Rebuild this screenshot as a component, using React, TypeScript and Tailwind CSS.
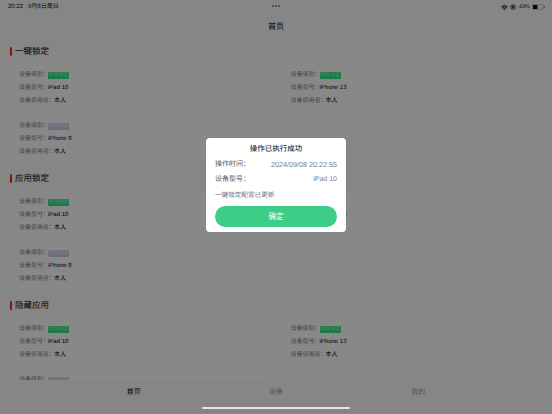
import { Wifi } from "lucide-react";

type Device = { name: string; admin: boolean };

const devices: Device[] = [
  { name: "iPad 10", admin: true },
  { name: "iPhone 13", admin: true },
  { name: "iPhone 8", admin: false },
];

const sections = ["一键锁定", "应用锁定", "隐藏应用"];

function DeviceCard({ device }: { device: Device }) {
  return (
    <div className="h-[47px] rounded-[2px] bg-white/25 pl-[9px] pt-[4px] text-[6px] leading-[13px]">
      <div className="flex h-[13px] items-center pt-[1px]">
        <span className="text-[#7c7c7c]">设备级别：</span>
        <span
          className={
            device.admin
              ? "ml-[-1px] flex h-[7px] w-[21px] items-center justify-center rounded-[1px] bg-[#2be082] text-[5px] text-[#9fe8c0]"
              : "ml-[-1px] flex h-[7px] w-[21px] items-center justify-center rounded-[1px] bg-[#c2c8e0] text-[5px] text-[#e2e5f0]"
          }
        >
          {device.admin ? "管理设备" : "普通设备"}
        </span>
      </div>
      <div className="flex h-[13px] items-center pt-[1px]">
        <span className="text-[#7c7c7c]">设备型号：</span>
        <span className="ml-[-1px] text-black">{device.name}</span>
      </div>
      <div className="flex h-[13px] items-center pt-[1px]">
        <span className="text-[#7c7c7c]">设备使用者：</span>
        <span className="ml-[-1px] text-black">本人</span>
      </div>
    </div>
  );
}

function Section({ title }: { title: string }) {
  return (
    <section className="pb-[10px]">
      <div className="mb-[7px] flex h-[12px] items-center gap-[3px]">
        <div className="h-[9px] w-[2px] rounded-full bg-[#ff2418]" />
        <h2 className="text-[8.5px] leading-[12px] text-black">{title}</h2>
      </div>
      <div className="grid grid-cols-2 gap-x-[11px] gap-y-[4px]">
        {devices.map((device) => (
          <DeviceCard key={device.name} device={device} />
        ))}
      </div>
    </section>
  );
}

export default function App() {
  return (
    <div
      className="relative h-[414px] w-[552px] overflow-hidden bg-[#f4f4f4] [text-rendering:geometricPrecision]"
      style={{ fontFamily: '"Liberation Sans", "Noto Sans CJK SC", sans-serif' }}
    >
      <div className="flex h-[13px] items-center justify-between pl-[8px] pr-[7px] pt-[1px] text-[6px] text-[#111]">
        <div className="flex gap-[5px]">
          <span>20:22</span>
          <span>9月8日周日</span>
        </div>
        <div className="flex items-center gap-[2px]">
          <Wifi size={7} strokeWidth={3} className="text-black" />
          <svg width="6" height="6" viewBox="0 0 12 12" className="text-black">
            <circle cx="6" cy="6" r="4.5" fill="none" stroke="currentColor" strokeWidth="1.6" />
            <circle cx="6" cy="6" r="2" fill="currentColor" />
          </svg>
          <span className="ml-[1px] text-[5.5px]">43%</span>
          <svg width="13" height="6" viewBox="0 0 26 12">
            <rect x="0.5" y="0.5" width="22" height="11" rx="3" fill="none" stroke="#000" strokeOpacity="0.5" />
            <rect x="2" y="2" width="9" height="8" rx="1.5" fill="#000" />
            <rect x="24" y="4" width="1.5" height="4" fill="#000" fillOpacity="0.5" />
          </svg>
        </div>
      </div>
      <header className="flex h-[26px] items-center justify-center pt-[1px] text-[8px] text-black">首页</header>

      <main className="h-[341px] overflow-hidden px-[10px] pt-[6px]">
        {sections.map((title) => (
          <Section key={title} title={title} />
        ))}
      </main>

      <nav className="absolute bottom-0 left-0 right-0 h-[34px] bg-[#f4f4f4] pt-[2px]">
        <div className="mx-auto grid h-[22px] w-[427px] grid-cols-3 items-center text-center text-[7px]">
          <span className="text-black">首页</span>
          <span className="text-[#999]">设备</span>
          <span className="text-[#999]">我的</span>
        </div>
      </nav>

      <div className="absolute left-[272px] top-[5px] flex gap-[1.5px]">
        <span className="h-[1.5px] w-[1.5px] rounded-full bg-[#777]" />
        <span className="h-[1.5px] w-[1.5px] rounded-full bg-[#777]" />
        <span className="h-[1.5px] w-[1.5px] rounded-full bg-[#777]" />
      </div>

      <div className="absolute inset-0 bg-black/45" />

      <div className="absolute bottom-[5px] left-[202px] h-[2px] w-[148px] rounded-full bg-[#e4e4e4]" />

      <div className="absolute left-[206px] top-[138px] h-[94px] w-[140px] rounded-[4px] bg-white px-[9px] pt-[5px]">
        <div className="text-center text-[7.5px] font-medium leading-[11px] text-[#2d3340]">操作已执行成功</div>
        <div className="mt-[4px] flex h-[15px] items-center justify-between text-[7px]">
          <span className="text-[#555a66]">操作时间：</span>
          <span className="text-[7.2px] text-[#7a7f8a]">2024/09/08 20:22:55</span>
        </div>
        <div className="flex h-[15px] items-center justify-between text-[7px]">
          <span className="text-[#555a66]">设备型号：</span>
          <span className="text-[#7a7f8a]">iPad 10</span>
        </div>
        <div className="flex h-[15px] items-center text-[6.6px] text-[#6a7080]">一键锁定配置已更新</div>
        <button className="mt-[2px] h-[21px] w-[122px] rounded-full bg-[#3ccd87] text-[7.5px] text-white">确定</button>
      </div>
    </div>
  );
}
